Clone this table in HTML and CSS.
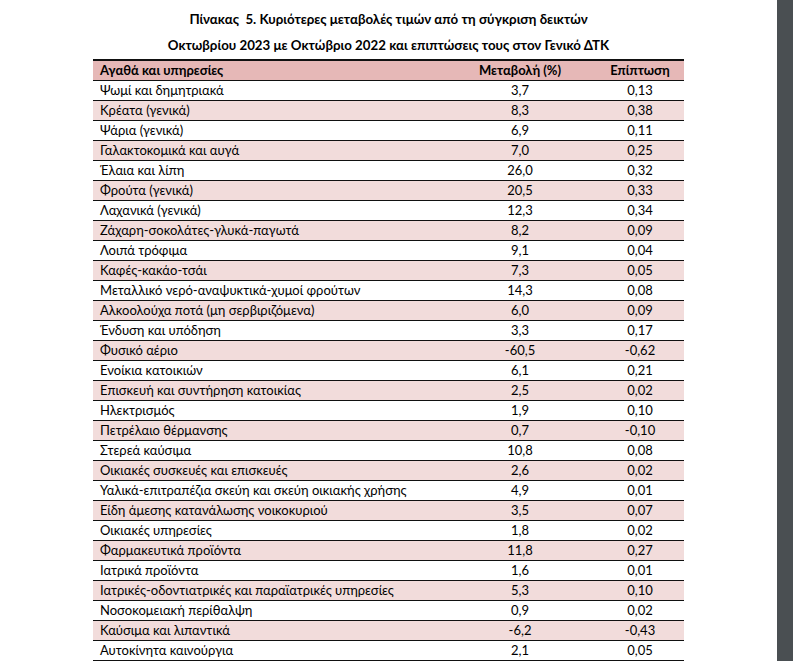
FILE: index.html
```html
<!DOCTYPE html>
<html lang="el">
<head>
<meta charset="utf-8">
<link rel="stylesheet" href="styles.css">
</head>
<body>
<div class="screen">
  <main class="page">
    <h1 class="title">Πίνακας&nbsp; 5. Κυριότερες μεταβολές τιμών από τη σύγκριση δεικτών<br>Οκτωβρίου 2023 με Οκτώβριο 2022 και επιπτώσεις τους στον Γενικό ΔΤΚ</h1>
    <table class="data">
      <thead>
        <tr><th class="name">Αγαθά και υπηρεσίες</th><th class="chg">Μεταβολή (%)</th><th class="imp">Επίπτωση</th></tr>
      </thead>
      <tbody>
        <tr><td class="name">Ψωμί και δημητριακά</td><td class="chg">3,7</td><td class="imp">0,13</td></tr>
        <tr class="alt"><td class="name">Κρέατα (γενικά)</td><td class="chg">8,3</td><td class="imp">0,38</td></tr>
        <tr><td class="name">Ψάρια (γενικά)</td><td class="chg">6,9</td><td class="imp">0,11</td></tr>
        <tr class="alt"><td class="name">Γαλακτοκομικά και αυγά</td><td class="chg">7,0</td><td class="imp">0,25</td></tr>
        <tr><td class="name">Έλαια και λίπη</td><td class="chg">26,0</td><td class="imp">0,32</td></tr>
        <tr class="alt"><td class="name">Φρούτα (γενικά)</td><td class="chg">20,5</td><td class="imp">0,33</td></tr>
        <tr><td class="name">Λαχανικά (γενικά)</td><td class="chg">12,3</td><td class="imp">0,34</td></tr>
        <tr class="alt"><td class="name">Ζάχαρη-σοκολάτες-γλυκά-παγωτά</td><td class="chg">8,2</td><td class="imp">0,09</td></tr>
        <tr><td class="name">Λοιπά τρόφιμα</td><td class="chg">9,1</td><td class="imp">0,04</td></tr>
        <tr class="alt"><td class="name">Καφές-κακάο-τσάι</td><td class="chg">7,3</td><td class="imp">0,05</td></tr>
        <tr><td class="name">Μεταλλικό νερό-αναψυκτικά-χυμοί φρούτων</td><td class="chg">14,3</td><td class="imp">0,08</td></tr>
        <tr class="alt"><td class="name">Αλκοολούχα ποτά (μη σερβιριζόμενα)</td><td class="chg">6,0</td><td class="imp">0,09</td></tr>
        <tr><td class="name">Ένδυση και υπόδηση</td><td class="chg">3,3</td><td class="imp">0,17</td></tr>
        <tr class="alt"><td class="name">Φυσικό αέριο</td><td class="chg">-60,5</td><td class="imp">-0,62</td></tr>
        <tr><td class="name">Ενοίκια κατοικιών</td><td class="chg">6,1</td><td class="imp">0,21</td></tr>
        <tr class="alt"><td class="name">Επισκευή και συντήρηση κατοικίας</td><td class="chg">2,5</td><td class="imp">0,02</td></tr>
        <tr><td class="name">Ηλεκτρισμός</td><td class="chg">1,9</td><td class="imp">0,10</td></tr>
        <tr class="alt"><td class="name">Πετρέλαιο θέρμανσης</td><td class="chg">0,7</td><td class="imp">-0,10</td></tr>
        <tr><td class="name">Στερεά καύσιμα</td><td class="chg">10,8</td><td class="imp">0,08</td></tr>
        <tr class="alt"><td class="name">Οικιακές συσκευές και επισκευές</td><td class="chg">2,6</td><td class="imp">0,02</td></tr>
        <tr><td class="name">Υαλικά-επιτραπέζια σκεύη και σκεύη οικιακής χρήσης</td><td class="chg">4,9</td><td class="imp">0,01</td></tr>
        <tr class="alt"><td class="name">Είδη άμεσης κατανάλωσης νοικοκυριού</td><td class="chg">3,5</td><td class="imp">0,07</td></tr>
        <tr><td class="name">Οικιακές υπηρεσίες</td><td class="chg">1,8</td><td class="imp">0,02</td></tr>
        <tr class="alt"><td class="name">Φαρμακευτικά προϊόντα</td><td class="chg">11,8</td><td class="imp">0,27</td></tr>
        <tr><td class="name">Ιατρικά προϊόντα</td><td class="chg">1,6</td><td class="imp">0,01</td></tr>
        <tr class="alt"><td class="name">Ιατρικές-οδοντιατρικές και παραϊατρικές υπηρεσίες</td><td class="chg">5,3</td><td class="imp">0,10</td></tr>
        <tr><td class="name">Νοσοκομειακή περίθαλψη</td><td class="chg">0,9</td><td class="imp">0,02</td></tr>
        <tr class="alt"><td class="name">Καύσιμα και λιπαντικά</td><td class="chg">-6,2</td><td class="imp">-0,43</td></tr>
        <tr><td class="name">Αυτοκίνητα καινούργια</td><td class="chg">2,1</td><td class="imp">0,05</td></tr>
        <tr class="alt"><td class="name">&nbsp;</td><td class="chg">&nbsp;</td><td class="imp">&nbsp;</td></tr>
      </tbody>
    </table>
  </main>
  <div class="rail"></div>
</div>
</body>
</html>
```

FILE: styles.css
```css
html, body {
  margin: 0;
  padding: 0;
  overflow: hidden;
  background: #ffffff;
}

.screen {
  display: flex;
  width: 793px;
  height: 661px;
  overflow: hidden;
}

.page {
  flex: 1;
  min-width: 0;
  background: #ffffff;
  font-family: Lato, "Noto Sans", sans-serif;
  color: #000000;
}

.rail {
  width: 16px;
  flex: none;
  background: #4a4f52;
}

.title {
  margin: 6px 0 0;
  font-size: 13.3px;
  font-weight: 700;
  line-height: 26px;
  text-align: center;
  color: #000000;
}

.data {
  margin: 1px auto 0;
  width: 591px;
  border-collapse: collapse;
  font-size: 13px;
}

.data th,
.data td {
  height: 19px;
  padding: 0;
  line-height: 19px;
  border-bottom: 1px solid #111111;
  white-space: nowrap;
}

.data thead th {
  background: #e6b8b7;
  border-top: 2px solid #111111;
  font-weight: 700;
}

.data tr.alt td {
  background: #f2dcdb;
}

.data .name {
  text-align: left;
  padding-left: 7px;
  width: 344px;
}

.data .chg {
  text-align: center;
  width: 152px;
}

.data .imp {
  text-align: center;
  width: 88px;
  padding-right: 0;
}
```
